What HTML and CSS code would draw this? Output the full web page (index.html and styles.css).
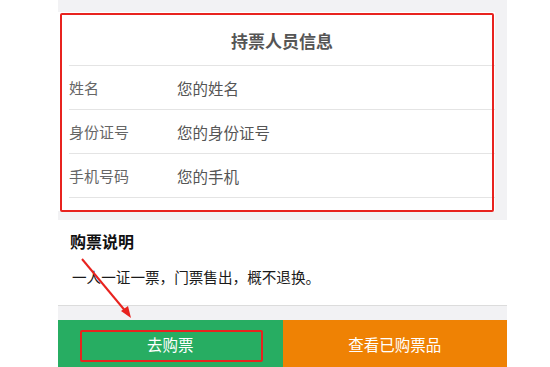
FILE: index.html
```html
<!DOCTYPE html>
<html lang="zh-CN">
<head>
    <meta charset="UTF-8">
    <title>购票</title>
    <link rel="stylesheet" href="styles.css">
</head>
<body>
<div class="phone">
    <div class="card">
        <h2 class="title">持票人员信息</h2>
        <div class="row"><span class="label">姓名</span><span class="value">您的姓名</span></div>
        <div class="row"><span class="label">身份证号</span><span class="value">您的身份证号</span></div>
        <div class="row"><span class="label">手机号码</span><span class="value">您的手机</span></div>
    </div>
    <div class="notice">
        <h3>购票说明</h3>
        <p>一人一证一票，门票售出，概不退换。</p>
    </div>
    <div class="actions">
        <button class="btn buy">去购票</button>
        <button class="btn view">查看已购票品</button>
    </div>

    <div class="mark mark-card"></div>
    <div class="mark mark-btn"></div>
    <svg class="arrow" width="550" height="367" viewBox="0 0 550 367">
        <line x1="82" y1="259" x2="127" y2="313" stroke="#e8231f" stroke-width="2"/>
        <polygon points="131,318 121,311 128,306" fill="#e8231f"/>
    </svg>
</div>
</body>
</html>
```

FILE: styles.css
```css
* { box-sizing: border-box; }
body {
    margin: 0;
    background: #fff;
    font-family: "Noto Sans CJK SC", "Noto Sans", sans-serif;
}
.phone {
    width: 449px;
    height: 367px;
    margin-left: 58px;
    padding-top: 12px;
    background: #f2f2f4;
    display: flex;
    flex-direction: column;
}
.card {
    background: #fff;
    margin-right: 12px;
    padding-bottom: 13px;
}
.title {
    margin: 0 0 0 11px;
    height: 54px;
    line-height: 58px;
    text-align: center;
    font-size: 17px;
    font-weight: bold;
    color: #555;
    border-bottom: 1px solid #e4e4e4;
}
.row {
    margin-left: 11px;
    height: 44px;
    display: flex;
    align-items: center;
    border-bottom: 1px solid #e4e4e4;
    font-size: 15px;
    color: #666;
}
.label { width: 108px; }
.value { color: #555; font-size: 15.5px; }
.notice {
    margin-top: 9px;
    background: #fff;
    height: 86px;
    padding: 8px 12px 0;
    border-bottom: 1px solid #dcdcdc;
}
.notice h3 {
    margin: 0;
    font-size: 16px;
    font-weight: bold;
    color: #111;
    line-height: 26px;
}
.notice p {
    margin: 11px 0 0 2px;
    font-size: 14.6px;
    color: #1a1a1a;
    line-height: 24px;
}
.actions {
    margin-top: auto;
    display: flex;
    height: 47px;
}
.btn {
    flex: 1;
    border: none;
    color: #fff;
    font-family: inherit;
    font-size: 15.5px;
    padding: 0;
}
.buy { background: #27ad62; }
.view { background: #ef8204; }
.mark {
    position: absolute;
    border: 2px solid #e8231f;
    border-radius: 2px;
}
.mark-card { left: 60px; top: 13px; width: 434px; height: 199px; }
.mark-btn { left: 80px; top: 330px; width: 183px; height: 32px; }
.arrow {
    position: absolute;
    left: 0;
    top: 0;
}
```
